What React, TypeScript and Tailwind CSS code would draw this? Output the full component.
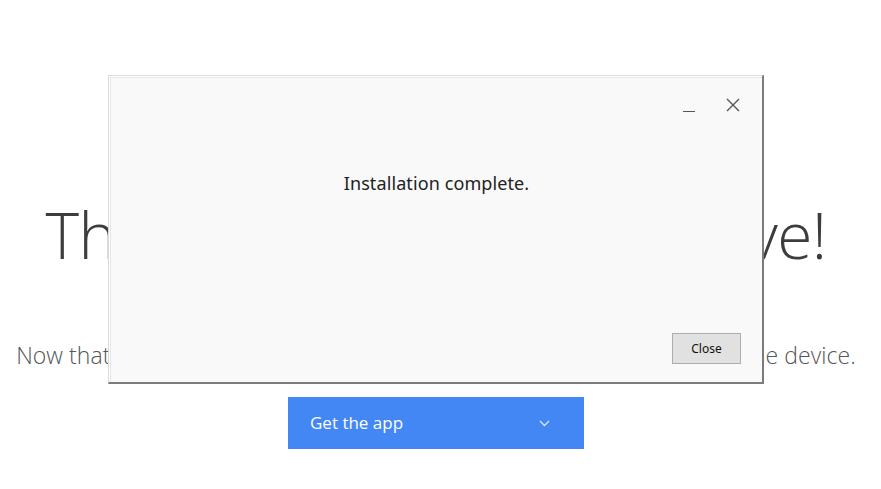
export default function App() {
  return (
    <div className="relative w-full h-[489px] bg-white overflow-hidden" style={{ fontFamily: '"Open Sans", sans-serif' }}>
      <div className="flex flex-col items-center pt-[203px] pr-[9px]">
        <h1 className="text-[64px] leading-none font-light text-[#3d3d3d] whitespace-nowrap tracking-[-0.65px]">There's an app you will love!</h1>
        <p className="mt-[77px] text-[23px] leading-none font-light text-[#555] whitespace-nowrap tracking-[0.06px]">Now that you have it installed, get the app on your phone or other mobile device.</p>
        <button className="mt-[30px] w-[296px] h-[52px] bg-[#4387f5] text-white flex items-center justify-between pl-[22px] pr-[34px] text-[17px]">
          <span>Get the app</span>
          <svg width="11" height="7" viewBox="0 0 11 7" fill="none" stroke="#dbe7fd" strokeWidth="1.3">
            <path d="M1 1l4.5 4.5L10 1" />
          </svg>
        </button>
      </div>

      <div className="absolute left-[108px] top-[75px] w-[656px] h-[309px] border-t border-l border-[#dadada] border-r-2 border-b-2 border-r-[#7b7b7b] border-b-[#7b7b7b] bg-white">
        <div className="w-full h-full border-t border-l border-white">
          <div className="relative w-full h-full border-t border-l border-[#e6e6e6] bg-[#f9f9f9] flex flex-col items-center" style={{ fontFamily: '"Noto Sans", sans-serif' }}>
            <div className="absolute left-[572px] top-[20px] w-[13px] h-[14px] flex items-end">
              <div className="w-[12px] h-[1.5px] bg-[#555]" />
            </div>
            <svg className="absolute left-[615px] top-[20px]" width="14" height="14" viewBox="0 0 14 14" stroke="#555" strokeWidth="1.4">
              <path d="M1 1l12 12M13 1L1 13" />
            </svg>
            <p className="mt-[96px] text-[18px] leading-none text-[#222] tracking-[0.1px]">Installation complete.</p>
            <button className="absolute left-[561px] top-[255px] w-[69px] h-[31px] border border-[#adadad] bg-[#e1e1e1] text-[12px] text-[#111]" style={{ fontFamily: '"Noto Sans", sans-serif' }}>Close</button>
          </div>
        </div>
      </div>
    </div>
  );
}
